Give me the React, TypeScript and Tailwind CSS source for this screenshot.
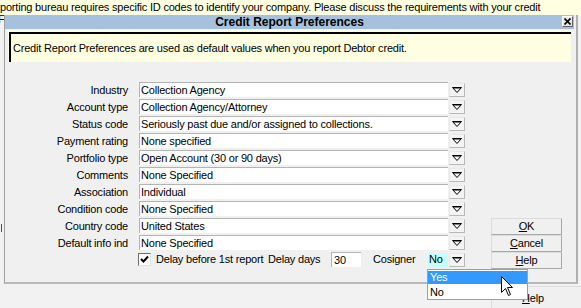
import React from "react";

const font = { fontFamily: '"Liberation Sans", Arial, sans-serif' };

function Tri() {
  return (
    <svg width="10" height="6" viewBox="0 0 10 6">
      <path d="M0.5 0.5 H9.5 L5 5.5 Z" fill="none" stroke="#000" strokeWidth="1" />
      <path d="M1 1 H9" stroke="#000" strokeWidth="1" />
    </svg>
  );
}

function DropBtn() {
  return (
    <div className="ml-[1px] flex h-[14px] w-[16px] items-center justify-center border border-t-[#e8e8e8] border-l-[#e8e8e8] border-r-[#b8b8b8] border-b-[#b8b8b8] bg-[#f4f4f4]">
      <Tri />
    </div>
  );
}

function Row({ label, value }: { label: string; value: string }) {
  return (
    <div className="flex h-[15px] items-center">
      <div className="w-[123px] whitespace-nowrap text-right leading-[13px] pt-[2px]">{label}</div>
      <div className="ml-[11px] flex h-[15px] w-[309px] items-center border-t border-l border-[#b4b4b4] bg-white pl-[1px] leading-[13px] whitespace-nowrap overflow-hidden">
        {value}
      </div>
      <DropBtn />
    </div>
  );
}

function Btn({ k, rest }: { k: string; rest: string }) {
  return (
    <div className="flex h-[17px] w-[71px] items-center justify-center border border-t-[#dcdcdc] border-l-[#dcdcdc] border-r-[#a8a8a8] border-b-[#a8a8a8] bg-[#f0f0f0] leading-[13px]">
      <span className="underline">{k}</span>
      {rest}
    </div>
  );
}

export default function App() {
  const rows: [string, string][] = [
    ["Industry", "Collection Agency"],
    ["Account type", "Collection Agency/Attorney"],
    ["Status code", "Seriously past due and/or assigned to collections."],
    ["Payment rating", "None specified"],
    ["Portfolio type", "Open Account (30 or 90 days)"],
    ["Comments", "None Specified"],
    ["Association", "Individual"],
    ["Condition code", "None Specified"],
    ["Country code", "United States"],
    ["Default info ind", "None Specified"],
  ];
  return (
    <div
      className="relative h-[308px] w-[581px] overflow-hidden bg-[#f2f2f2] text-[11px] tracking-[-0.2px] text-black"
      style={font}
    >
      {/* background window text strip */}
      <div className="h-[15px] bg-[#ffffe1] whitespace-nowrap leading-[14px] pl-0">
        porting bureau requires specific ID codes to identify your company. Please discuss the requirements with your credit
      </div>
      <div className="absolute left-[-2px] top-[14px] leading-[10px] text-[11px]">F</div>
      <div className="absolute left-[1px] top-[224px] h-[8px] w-[1px] bg-[#505050]" />

      {/* Help button behind */}
      <div className="absolute left-[491px] top-[286px] flex h-[24px] w-[92px] items-center border border-t-[#dcdcdc] border-l-[#dcdcdc] border-r-[#a8a8a8] border-b-[#a8a8a8] bg-[#f0f0f0] pt-[1px] pl-[30px]">
        <span><span className="underline">H</span>elp</span>
      </div>

      {/* dialog */}
      <div className="absolute left-[4px] top-[15px] flex h-[269px] w-[574px] flex-col border-l border-r-2 border-b-2 border-l-[#a0a0a0] border-r-[#b0b0b0] border-b-[#b8b8b8] bg-[#f0f0f0]">
        <div className="relative mr-[2px] flex h-[14px] items-center justify-center bg-[#a6c1de] text-[12px] font-bold leading-[14px] tracking-normal">
          Credit Report Preferences
          <div className="absolute right-[1px] top-[1px] flex h-[11px] w-[11px] items-center justify-center border border-t-white border-l-white border-r-[#606060] border-b-[#606060] bg-[#e8e8e8]">
            <svg width="7" height="7" viewBox="0 0 7 7">
              <path d="M0.5 0.5 L6.5 6.5 M6.5 0.5 L0.5 6.5" stroke="#000" strokeWidth="1.6" />
            </svg>
          </div>
        </div>
        <div className="mt-[1px] ml-[3px] mr-[5px] h-[32px] bg-[#ffffe1] pt-[2px] pl-[1px]">
          <div className="flex h-[30px] items-center border-t-2 border-l-2 border-t-black border-l-black pl-[2px] leading-[13px]">
            Credit Report Preferences are used as default values when you report Debtor credit.
          </div>
        </div>

        <div className="mt-[20px] flex">
          <div className="flex flex-col gap-[2px]">
            {rows.map(([l, v]) => (
              <Row key={l} label={l} value={v} />
            ))}
            <div className="flex h-[15px] items-center">
              <div className="ml-[133px] flex h-[13px] w-[13px] items-center justify-center border border-t-[#707070] border-l-[#707070] border-r-[#e0e0e0] border-b-[#e0e0e0] bg-white">
                <svg width="9" height="9" viewBox="0 0 9 9">
                  <path d="M1 4 L3.5 6.5 L8 1.5" fill="none" stroke="#000" strokeWidth="2" />
                </svg>
              </div>
              <div className="w-[117px] pl-[5px] whitespace-nowrap leading-[13px]">Delay before 1st report</div>
              <div className="w-[63px] whitespace-nowrap leading-[13px]">Delay days</div>
              <div className="flex h-[15px] w-[30px] items-center border-t border-l border-[#b4b4b4] bg-white pl-[2px] leading-[13px]">30</div>
              <div className="w-[67px] pl-[12px] whitespace-nowrap leading-[13px]">Cosigner</div>
              <div className="flex h-[14px] w-[20px] items-center bg-[#c4ffff] pl-[1px] leading-[13px]">No</div>
              <DropBtn />
            </div>
          </div>
          <div className="ml-[26px] mt-[136px] flex flex-col">
            <Btn k="O" rest="K" />
            <Btn k="C" rest="ancel" />
            <Btn k="H" rest="elp" />
          </div>
        </div>
      </div>

      {/* dropdown list */}
      <div className="absolute left-[427px] top-[269px] flex h-[31px] w-[101px] flex-col border border-[#a0a0a0] bg-white pt-[1px]">
        <div className="flex h-[13px] items-center bg-[#3399ff] pl-[2px] text-white leading-[13px]">Yes</div>
        <div className="mt-[2px] flex h-[13px] items-center pl-[2px] leading-[13px]">No</div>
      </div>

      {/* cursor */}
      <svg className="absolute left-[501px] top-[276px]" width="13" height="21" viewBox="0 0 13 21">
        <path d="M0.5 0.5 L0.5 16.5 L4.5 12.5 L7.5 19.5 L9.5 18.5 L6.5 11.5 L11.5 11.5 Z" fill="#fff" stroke="#000" strokeWidth="1" />
      </svg>
    </div>
  );
}
